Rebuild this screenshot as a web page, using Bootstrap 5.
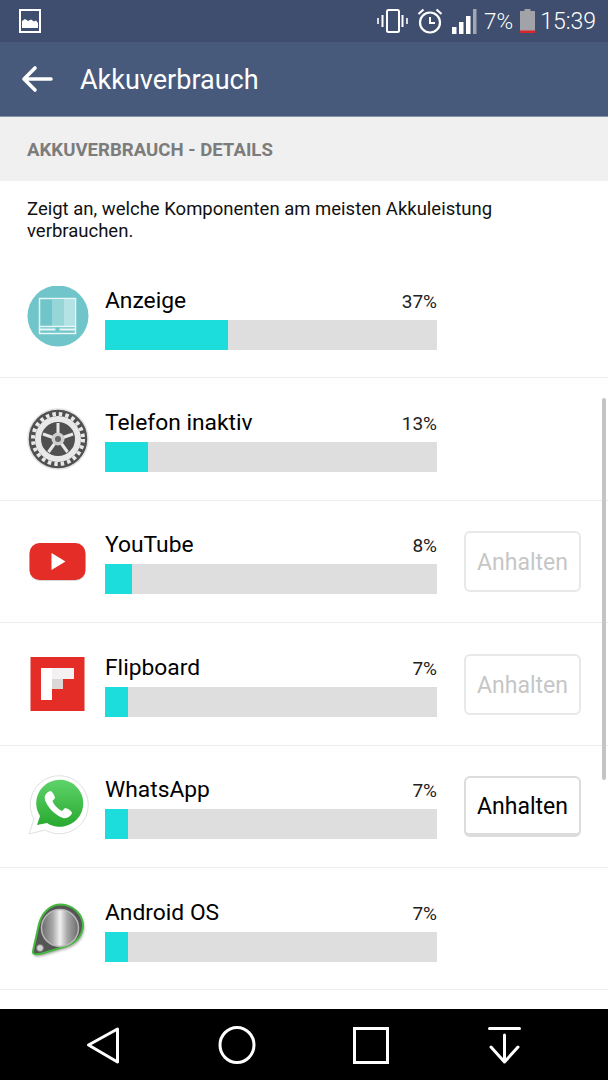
<!DOCTYPE html>
<html lang="de">
<head>
  <meta charset="UTF-8" />
  <meta name="viewport" content="width=device-width, initial-scale=1.0"/>
  <title>Akkuverbrauch</title>
  <link href="https://cdn.jsdelivr.net/npm/bootstrap@5.3.2/dist/css/bootstrap.min.css" rel="stylesheet" />
  <style>
    html, body { height: 1080px; overflow: hidden; }
    body { font-family: Roboto, "Liberation Sans", sans-serif; color: #000; background: #fff; }
    .phone-shell { height: 1080px; }
    .status-bar { height: 42px; background: #3f4e6e; color: #fff; padding: 0 12px 0 19px; }
    .status-right { font-size: 23px; line-height: 1; font-weight: 300; }
    .status-vib { margin-right: 9px; }
    .status-alarm { margin-right: 9px; }
    .status-pct { font-size: 22.5px; margin: 0 7px 0 7px; }
    .status-batt { margin-right: 5px; }
    .app-bar { height: 75px; background: #475a7b; color: #fff; padding-left: 21px; border-bottom: 1px solid #8491a8; }
    .app-title { font-size: 27px; font-weight: 400; margin-left: 27px; padding-top: 2px; }
    .settings-body { min-height: 0; }
    .section-head { height: 64px; background: #f0f0f0; color: #7c7c7c; font-size: 18.6px; font-weight: 700; padding: 4px 0 0 27px; }
    .intro-text { height: 75px; padding: 17px 27px 0; font-size: 18.5px; line-height: 22px; color: #111; }
    .usage-row { height: 122.4px; border-bottom: 1px solid #ececec; padding-left: 27px; }
    .usage-icon { width: 62px; height: 62px; margin-right: 16px; }
    .usage-main { width: 332px; margin-top: 4px; }
    .usage-name { font-size: 22.8px; line-height: 26px; }
    .usage-pct { font-size: 19px; line-height: 24px; color: #222; }
    .usage-track { height: 30px; background: #dedede; margin-top: 6px; }
    .usage-fill { height: 100%; background: #1cdcdc; }
    .stop-btn { width: 117px; height: 61px; margin: 1px 0 0 27px; padding: 3px 0 0; font-size: 23px; background: #fff; border: 2px solid #e6e6e6; border-radius: 6px; color: #000; }
    .stop-btn:disabled { color: #c6c6c6; background: #fff; border-color: #e8e8e8; opacity: 1; }
    .stop-btn.is-live { border-bottom-width: 4px; border-color: #dcdcdc; }
    .scroll-thumb { position: absolute; right: 2px; top: 281px; width: 4px; height: 382px; background: #c4c4c4; border-radius: 2px; }
    .nav-strip { height: 71px; background: #000; flex-shrink: 0; }
    .nav-strip svg { display: block; }
  </style>
</head>
<body>
  <div class="phone-shell d-flex flex-column">

    <!-- Status bar -->
    <div class="status-bar d-flex align-items-center justify-content-between flex-shrink-0">
      <svg width="22" height="24" viewBox="0 0 22 24">
        <rect x="1" y="1" width="20" height="22" fill="none" stroke="#fff" stroke-width="2"/>
        <path d="M3 19 V12 L6 10 L9 12 L12 10.5 L15 12.5 L17 11.5 L19 14 V19 Z" fill="#fff"/>
      </svg>
      <div class="status-right d-flex align-items-center">
        <svg class="status-vib" width="31" height="24" viewBox="0 0 31 24">
          <rect x="10" y="1" width="12" height="22" rx="1.5" fill="none" stroke="#fff" stroke-width="2"/>
          <path d="M5.500 6 V18 M25.500 6 V18" stroke="#fff" stroke-width="2"/>
          <path d="M1 9 V15 M30 9 V15" stroke="#fff" stroke-width="1.6"/>
        </svg>
        <svg class="status-alarm" width="26" height="26" viewBox="0 0 26 26">
          <circle cx="13" cy="14.500" r="10" fill="none" stroke="#fff" stroke-width="2.200"/>
          <path d="M13 9 V15 H18" fill="none" stroke="#fff" stroke-width="2"/>
          <path d="M1.500 6 L6.500 1.500 M24.500 6 L19.500 1.500" stroke="#fff" stroke-width="2.200"/>
        </svg>
        <svg width="25" height="25" viewBox="0 0 25 25">
          <rect x="0" y="18" width="4.500" height="7" fill="#fff"/>
          <rect x="7" y="13" width="4.500" height="12" fill="#fff"/>
          <rect x="14" y="7" width="4.500" height="18" fill="#fff"/>
          <rect x="21" y="0" width="3.500" height="25" fill="#a3a7b0"/>
        </svg>
        <span class="status-pct">7%</span>
        <svg class="status-batt" width="15" height="24" viewBox="0 0 15 24">
          <path d="M4.500 0 H10.500 V2 H15 V24 H0 V2 H4.500 Z" fill="#a1a3a8"/>
          <rect x="0" y="21.500" width="15" height="2.500" fill="#d9262c"/>
        </svg>
        <span>15:39</span>
      </div>
    </div>

    <!-- App bar -->
    <div class="app-bar d-flex align-items-center flex-shrink-0">
      <svg width="32" height="28" viewBox="0 0 32 28">
        <path d="M30 14 H4 M14 3 L3 14 L14 25" fill="none" stroke="#fff" stroke-width="3.600" stroke-linecap="round" stroke-linejoin="round"/>
      </svg>
      <span class="app-title">Akkuverbrauch</span>
    </div>

    <!-- Content -->
    <div class="settings-body flex-grow-1 overflow-hidden position-relative">
      <div class="section-head d-flex align-items-center">AKKUVERBRAUCH - DETAILS</div>
      <div class="intro-text">Zeigt an, welche Komponenten am meisten Akkuleistung verbrauchen.</div>

      <div class="usage-row d-flex align-items-center">
        <svg class="usage-icon" viewBox="0 1 62 62">
          <circle cx="31" cy="31" r="30.500" fill="#6fc5ca"/>
          <rect x="12.500" y="13.500" width="36" height="35" fill="none" stroke="#e8f6f7" stroke-width="1.500"/>
          <rect x="25" y="14" width="12" height="27" fill="#96d6d9"/>
          <rect x="37" y="14" width="11" height="27" fill="#b5e2e4"/>
          <path d="M13 41.500 H48" stroke="#e8f6f7" stroke-width="1.500"/>
          <path d="M13 44.500 H48" stroke="#e8f6f7" stroke-width="2"/>
          <circle cx="30.500" cy="44.500" r="2.200" fill="#6fc5ca"/>
        </svg>
        <div class="usage-main">
          <div class="d-flex justify-content-between align-items-end">
            <span class="usage-name">Anzeige</span><span class="usage-pct">37%</span>
          </div>
          <div class="usage-track"><div class="usage-fill" style="width:37%"></div></div>
        </div>
      </div>

      <div class="usage-row d-flex align-items-center">
        <svg class="usage-icon" viewBox="0 0 62 62">
          <circle cx="31" cy="31" r="30" fill="#505050" stroke="#e2e2e2" stroke-width="1.500"/>
          <circle cx="31" cy="31" r="25" fill="none" stroke="#e8e8e8" stroke-width="4" stroke-dasharray="3.500 3.050"/>
          <circle cx="31" cy="31" r="20" fill="none" stroke="#e8e8e8" stroke-width="6"/>
          <path d="M31 15 V26 M16 26 L26 29.500 M21.500 44 L28 35 M40.500 44 L34 35 M46 26 L36 29.500" stroke="#e8e8e8" stroke-width="3"/>
          <circle cx="31" cy="31" r="6.500" fill="#cfcfcf"/>
          <circle cx="31" cy="31" r="3" fill="#666"/>
        </svg>
        <div class="usage-main">
          <div class="d-flex justify-content-between align-items-end">
            <span class="usage-name">Telefon inaktiv</span><span class="usage-pct">13%</span>
          </div>
          <div class="usage-track"><div class="usage-fill" style="width:13%"></div></div>
        </div>
      </div>

      <div class="usage-row d-flex align-items-center">
        <svg class="usage-icon" viewBox="0 -1 62 62">
          <rect x="2.500" y="13" width="56" height="37" rx="10" fill="#d8d8d8"/>
          <rect x="2.500" y="12" width="56" height="37" rx="10" fill="#e52d27"/>
          <path d="M24.500 22 L38.500 30.500 L24.500 39 Z" fill="#fff"/>
        </svg>
        <div class="usage-main">
          <div class="d-flex justify-content-between align-items-end">
            <span class="usage-name">YouTube</span><span class="usage-pct">8%</span>
          </div>
          <div class="usage-track"><div class="usage-fill" style="width:8%"></div></div>
        </div>
        <button class="btn stop-btn" disabled>Anhalten</button>
      </div>

      <div class="usage-row d-flex align-items-center">
        <svg class="usage-icon" viewBox="0 0 62 62">
          <rect x="3.500" y="4" width="54" height="54" fill="#e52d27"/>
          <rect x="14" y="15" width="11" height="32" fill="#fff"/>
          <rect x="25" y="15" width="22" height="11" fill="#f3f1f1"/>
          <rect x="25" y="26" width="11" height="10" fill="#ddd8d8"/>
        </svg>
        <div class="usage-main">
          <div class="d-flex justify-content-between align-items-end">
            <span class="usage-name">Flipboard</span><span class="usage-pct">7%</span>
          </div>
          <div class="usage-track"><div class="usage-fill" style="width:7%"></div></div>
        </div>
        <button class="btn stop-btn" disabled>Anhalten</button>
      </div>

      <div class="usage-row d-flex align-items-center">
        <svg class="usage-icon" viewBox="0 0 62 62">
          <defs>
            <linearGradient id="waGreen" x1="0" y1="0" x2="0" y2="1">
              <stop offset="0" stop-color="#5fd36b"/><stop offset="1" stop-color="#28a92f"/>
            </linearGradient>
          </defs>
          <path d="M2 59 L7 44 A29 29 0 1 1 18 55 Z" fill="#fff" stroke="#e0e0e0" stroke-width="1"/>
          <path d="M10 50 L13 41 A23.500 23.500 0 1 1 20 48 Z" fill="url(#waGreen)"/>
          <path d="M21 17 C18 19 17 22 18 25 C21 33 28 40 36 43 C40 44 44 41 45 38 C45 36 40 33 38 33 L35 36 C31 34 27 30 25.500 26 L28 23 C28 21 25 16 23.500 16 Z" fill="#fff"/>
        </svg>
        <div class="usage-main">
          <div class="d-flex justify-content-between align-items-end">
            <span class="usage-name">WhatsApp</span><span class="usage-pct">7%</span>
          </div>
          <div class="usage-track"><div class="usage-fill" style="width:7%"></div></div>
        </div>
        <button class="btn stop-btn is-live">Anhalten</button>
      </div>

      <div class="usage-row d-flex align-items-center">
        <svg class="usage-icon" viewBox="0 0 62 62">
          <defs>
            <linearGradient id="metalDisc" x1="0" y1="0" x2="1" y2="0">
              <stop offset="0" stop-color="#6a6a6a"/><stop offset=".3" stop-color="#a8a8a8"/><stop offset=".5" stop-color="#f0f0f0"/><stop offset=".7" stop-color="#a8a8a8"/><stop offset="1" stop-color="#6a6a6a"/>
            </linearGradient>
            <filter id="softShade" x="-20%" y="-20%" width="140%" height="140%"><feGaussianBlur stdDeviation="1.500"/></filter>
          </defs>
          <path d="M7 55 L13 28 C16 16 25 8.500 35 8.500 C47 9 57 18 57 30 C56 43 47 49 34 52 L16 57.500 C10 59 6 58.500 7 55 Z" fill="#999" filter="url(#softShade)"/>
          <path d="M6 53 L12 26 C15 14 24 6.500 34 6.500 C46 7 56 16 56 28 C55 41 46 47 33 50 L15 55.500 C9 57 5 56.500 6 53 Z" fill="#555" stroke="#45b83f" stroke-width="2"/>
          <circle cx="33" cy="30" r="18.500" fill="url(#metalDisc)" stroke="#b8b8b8" stroke-width="1.500"/>
          <circle cx="13" cy="50" r="3.500" fill="#d4d4d4" stroke="#777"/>
        </svg>
        <div class="usage-main">
          <div class="d-flex justify-content-between align-items-end">
            <span class="usage-name">Android OS</span><span class="usage-pct">7%</span>
          </div>
          <div class="usage-track"><div class="usage-fill" style="width:7%"></div></div>
        </div>
      </div>

      <div class="scroll-thumb"></div>
    </div>

    <!-- Nav bar -->
    <div class="nav-strip">
      <svg width="608" height="71" viewBox="0 0 608 71">
        <path d="M117.500 20 L88.500 36 L117.500 53 Z" fill="none" stroke="#fff" stroke-width="3" stroke-linejoin="round"/>
        <ellipse cx="237" cy="36" rx="17" ry="17.500" fill="none" stroke="#fff" stroke-width="3"/>
        <rect x="354.500" y="19.500" width="33" height="34" fill="none" stroke="#fff" stroke-width="3"/>
        <path d="M489.500 19.500 H519.500 M504.500 26 V53 M491 38 L504.500 53 L518 38" fill="none" stroke="#fff" stroke-width="3" stroke-linecap="round" stroke-linejoin="round"/>
      </svg>
    </div>
  </div>
</body>
</html>
